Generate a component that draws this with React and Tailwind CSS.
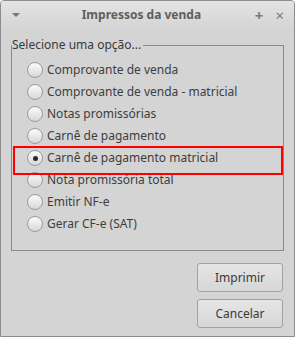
import React, { useState } from 'react';

const options = [
  'Comprovante de venda',
  'Comprovante de venda - matricial',
  'Notas promissórias',
  'Carnê de pagamento',
  'Carnê de pagamento matricial',
  'Nota promissória total',
  'Emitir NF-e',
  'Gerar CF-e (SAT)',
];

function Radio({ checked }) {
  return (
    <span className="w-[16px] h-[16px] rounded-full border border-[#9a9a9a] bg-gradient-to-b from-[#fbfbfb] to-[#d8d8d8] flex items-center justify-center shrink-0">
      {checked && <span className="w-[5px] h-[5px] rounded-full bg-[#2a2a2a]" />}
    </span>
  );
}

export default function App() {
  const [selected, setSelected] = useState(4);

  return (
    <div className="w-[295px] h-[337px] bg-[#d4d4d4] border border-[#8c8c8c] rounded-t-[4px] flex flex-col overflow-hidden text-[#3c3c3c] font-['Noto_Sans',sans-serif] relative">
      {/* title bar */}
      <div className="h-[28px] flex items-center px-[10px] bg-gradient-to-b from-[#e4e4e4] to-[#d4d4d4] shrink-0">
        <span className="w-0 h-0 border-l-[4px] border-r-[4px] border-t-[4px] border-l-transparent border-r-transparent border-t-[#777] ml-[1px]" />
        <span className="flex-1 text-center font-bold text-[12px] text-[#5e5e5e] pl-[8px]">Impressos da venda</span>
        <span className="text-[#7a7a7a] text-[15px] font-bold leading-none mr-[12px]">+</span>
        <span className="text-[#7a7a7a] text-[15px] leading-none">×</span>
      </div>

      {/* group box */}
      <fieldset className="mx-[10px] mt-[8px] h-[214px] border border-[#8a8a8a] px-[15px]">
        <legend className="text-[12px] leading-[16px] pr-[2px] -ml-[15px] text-[#3a3a3a]">Selecione uma opção...</legend>
        <div className="flex flex-col pt-[6px]">
          {options.map((label, i) => (
            <button
              key={label}
              onClick={() => setSelected(i)}
              className="h-[22px] flex items-center gap-[4px] text-left text-[12px] text-[#3e3e3e]"
            >
              <Radio checked={selected === i} />
              <span>{label}</span>
            </button>
          ))}
        </div>
      </fieldset>

      {/* buttons */}
      <div className="flex flex-col items-end gap-[7px] pr-[11px] mt-[12px]">
        {['Imprimir', 'Cancelar'].map((t) => (
          <button
            key={t}
            className="w-[86px] h-[29px] rounded-[3px] border border-[#a2a2a2] bg-gradient-to-b from-[#e6e6e6] to-[#d6d6d6] text-[12px] text-[#3a3a3a]"
          >
            {t}
          </button>
        ))}
      </div>

      {/* highlight annotation */}
      <div className="absolute left-[12px] top-[145px] w-[270px] h-[29px] border-2 border-[#ff0000] pointer-events-none" />
    </div>
  );
}
